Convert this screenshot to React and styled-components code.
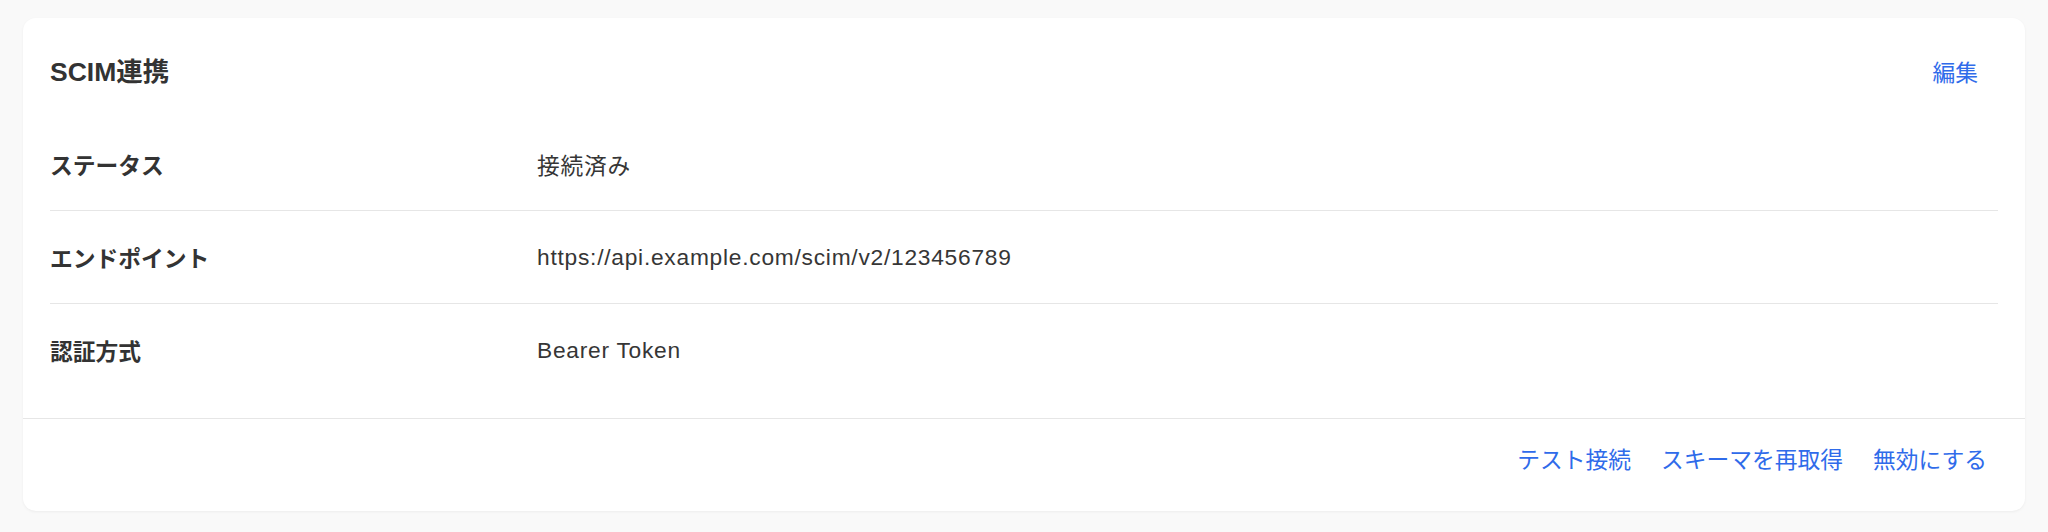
import React from "react";
import styled, { createGlobalStyle } from "styled-components";

const GlobalStyle = createGlobalStyle`
  html, body {
    margin: 0;
    padding: 0;
    background: #f9f9f9;
  }
  body {
    font-family: "Liberation Sans", "Noto Sans CJK JP", sans-serif;
    color: #333333;
  }
`;

const Page = styled.div`
  padding: 18px 23px 20px;
`;

const Card = styled.section`
  background: #ffffff;
  border-radius: 13px;
  box-shadow: 0 1px 3px rgba(0, 0, 0, 0.05);
  overflow: hidden;
`;

const Body = styled.div`
  padding: 28px 27px 22px;
`;

const Header = styled.header`
  display: flex;
  align-items: center;
  justify-content: space-between;
  height: 54px;
  margin-bottom: 18px;
`;

const Title = styled.h2`
  margin: 0;
  font-size: 26.5px;
  font-weight: 700;
  color: #333333;
  line-height: 1.4;
`;

const LinkButton = styled.button`
  border: none;
  background: none;
  font-family: "Liberation Sans", "Noto Sans CJK JP", sans-serif;
  font-size: 22.75px;
  line-height: 1.5;
  color: #2f6bea;
  cursor: pointer;
  padding: 0 ${(p) => (p.$wide ? "20px" : "15px")};
`;

const List = styled.dl`
  margin: 0;
`;

const Row = styled.div`
  display: grid;
  grid-template-columns: 487px 1fr;
  align-items: center;
  height: 92px;
  border-bottom: ${(p) => (p.$last ? "none" : "1px solid #e6e6e6")};
`;

const Label = styled.dt`
  font-size: 22.75px;
  font-weight: 700;
  color: #333333;
`;

const Value = styled.dd`
  margin: 0;
  font-size: 22.75px;
  letter-spacing: 0.75px;
  color: #363636;
`;

const Footer = styled.footer`
  display: flex;
  align-items: center;
  justify-content: flex-end;
  box-sizing: border-box;
  height: 93px;
  padding: 0 23px 10px 27px;
  border-top: 1px solid #e6e6e6;
`;

const rows = [
  { label: "ステータス", value: "接続済み" },
  { label: "エンドポイント", value: "https://api.example.com/scim/v2/123456789" },
  { label: "認証方式", value: "Bearer Token" },
];

export default function App() {
  return (
    <>
      <GlobalStyle />
      <Page>
        <Card>
          <Body>
            <Header>
              <Title>SCIM連携</Title>
              <LinkButton $wide>編集</LinkButton>
            </Header>
            <List>
              {rows.map((r, i) => (
                <Row key={r.label} $last={i === rows.length - 1}>
                  <Label>{r.label}</Label>
                  <Value>{r.value}</Value>
                </Row>
              ))}
            </List>
          </Body>
          <Footer>
            <LinkButton>テスト接続</LinkButton>
            <LinkButton>スキーマを再取得</LinkButton>
            <LinkButton>無効にする</LinkButton>
          </Footer>
        </Card>
      </Page>
    </>
  );
}
